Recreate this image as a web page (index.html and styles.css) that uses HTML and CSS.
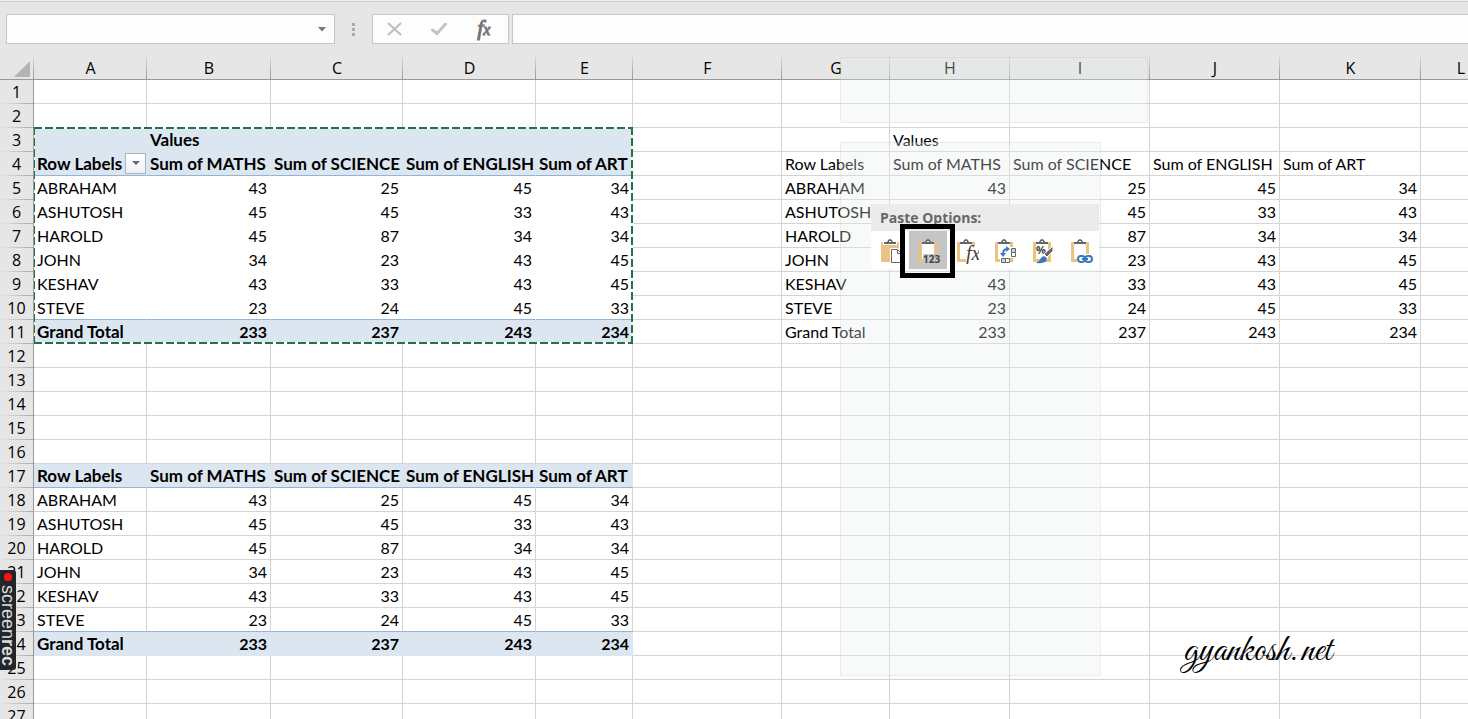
FILE: index.html
```
<!DOCTYPE html>
<html lang="en">
<head>
  <meta charset="utf-8">
  <meta name="viewport" content="width=device-width, initial-scale=1">
  <title>Pivot table - paste values</title>
  <link rel="stylesheet" href="styles.css">
</head>
<body>
  <!-- Formula bar -->
  <div class="formula-bar">
    <div class="name-box">
      <input type="text" class="name-input" aria-label="Name box">
      <button type="button" class="name-arrow" aria-label="Open name list">
        <svg width="8" height="5" viewBox="0 0 8 5"><path d="M0 0h8L4 4.500z" fill="#777"/></svg>
      </button>
    </div>
    <div class="grip"><i></i><i></i><i></i></div>
    <div class="fx-buttons">
      <button type="button" aria-label="Cancel">
        <svg width="16" height="14" viewBox="0 0 16 14"><path d="M1 1l13 12M14 1L1 13" stroke="#bdbdbd" stroke-width="2" fill="none"/></svg>
      </button>
      <button type="button" aria-label="Enter">
        <svg width="18" height="14" viewBox="0 0 18 14"><path d="M1 8l2-1 4 3 8-9 2 1-10 11z" fill="#c2c2c2" stroke="#c2c2c2"/></svg>
      </button>
      <button type="button" class="fx" aria-label="Insert function">f<span>x</span></button>
    </div>
    <input type="text" class="formula-input" aria-label="Formula">
  </div>

  <!-- Sheet -->
  <div class="sheet">
    <table class="grid">
      <colgroup>
        <col class="c-num"><col class="c-a"><col class="c-b"><col class="c-c"><col class="c-d"><col class="c-e"><col class="c-f"><col class="c-g"><col class="c-h"><col class="c-i"><col class="c-j"><col class="c-k"><col class="c-l">
      </colgroup>
      <thead>
        <tr><th class="corner"><svg width="16" height="16" viewBox="0 0 16 16"><path d="M16 0v16H0z" fill="#b4b4b4"/></svg></th><th>A</th><th>B</th><th>C</th><th>D</th><th>E</th><th>F</th><th>G</th><th>H</th><th>I</th><th>J</th><th>K</th><th>L</th></tr>
      </thead>
      <tbody>
        <tr><th>1</th><td></td><td></td><td></td><td></td><td></td><td></td><td></td><td></td><td></td><td></td><td></td><td></td></tr>
        <tr><th>2</th><td></td><td></td><td></td><td></td><td></td><td></td><td></td><td></td><td></td><td></td><td></td><td></td></tr>
        <tr class="pivot-top"><th>3</th><td></td><td>Values</td><td></td><td></td><td></td><td></td><td></td><td>Values</td><td></td><td></td><td></td><td></td></tr>
        <tr class="pivot-head"><th>4</th><td><div class="label-cell">Row Labels <button type="button" class="filter" aria-label="Filter row labels"><svg width="8" height="5" viewBox="0 0 8 5"><path d="M0 0h8L4 4z" fill="#666"/></svg></button></div></td><td>Sum of MATHS</td><td>Sum of SCIENCE</td><td>Sum of ENGLISH</td><td>Sum of ART</td><td></td><td>Row Labels</td><td>Sum of MATHS</td><td>Sum of SCIENCE</td><td>Sum of ENGLISH</td><td>Sum of ART</td><td></td></tr>
        <tr class="pivot-row"><th>5</th><td>ABRAHAM</td><td class="n">43</td><td class="n">25</td><td class="n">45</td><td class="n">34</td><td></td><td>ABRAHAM</td><td class="n">43</td><td class="n">25</td><td class="n">45</td><td class="n">34</td><td></td></tr>
        <tr class="pivot-row"><th>6</th><td>ASHUTOSH</td><td class="n">45</td><td class="n">45</td><td class="n">33</td><td class="n">43</td><td></td><td>ASHUTOSH</td><td class="n">45</td><td class="n">45</td><td class="n">33</td><td class="n">43</td><td></td></tr>
        <tr class="pivot-row"><th>7</th><td>HAROLD</td><td class="n">45</td><td class="n">87</td><td class="n">34</td><td class="n">34</td><td></td><td>HAROLD</td><td class="n"></td><td class="n">87</td><td class="n">34</td><td class="n">34</td><td></td></tr>
        <tr class="pivot-row"><th>8</th><td>JOHN</td><td class="n">34</td><td class="n">23</td><td class="n">43</td><td class="n">45</td><td></td><td>JOHN</td><td class="n"></td><td class="n">23</td><td class="n">43</td><td class="n">45</td><td></td></tr>
        <tr class="pivot-row"><th>9</th><td>KESHAV</td><td class="n">43</td><td class="n">33</td><td class="n">43</td><td class="n">45</td><td></td><td>KESHAV</td><td class="n">43</td><td class="n">33</td><td class="n">43</td><td class="n">45</td><td></td></tr>
        <tr class="pivot-row pivot-last"><th>10</th><td>STEVE</td><td class="n">23</td><td class="n">24</td><td class="n">45</td><td class="n">33</td><td></td><td>STEVE</td><td class="n">23</td><td class="n">24</td><td class="n">45</td><td class="n">33</td><td></td></tr>
        <tr class="pivot-total"><th>11</th><td>Grand Total</td><td class="n">233</td><td class="n">237</td><td class="n">243</td><td class="n">234</td><td></td><td>Grand Total</td><td class="n">233</td><td class="n">237</td><td class="n">243</td><td class="n">234</td><td></td></tr>
        <tr><th>12</th><td></td><td></td><td></td><td></td><td></td><td></td><td></td><td></td><td></td><td></td><td></td><td></td></tr>
        <tr><th>13</th><td></td><td></td><td></td><td></td><td></td><td></td><td></td><td></td><td></td><td></td><td></td><td></td></tr>
        <tr><th>14</th><td></td><td></td><td></td><td></td><td></td><td></td><td></td><td></td><td></td><td></td><td></td><td></td></tr>
        <tr><th>15</th><td></td><td></td><td></td><td></td><td></td><td></td><td></td><td></td><td></td><td></td><td></td><td></td></tr>
        <tr><th>16</th><td></td><td></td><td></td><td></td><td></td><td></td><td></td><td></td><td></td><td></td><td></td><td></td></tr>
        <tr class="pivot-head"><th>17</th><td>Row Labels</td><td>Sum of MATHS</td><td>Sum of SCIENCE</td><td>Sum of ENGLISH</td><td>Sum of ART</td><td></td><td></td><td></td><td></td><td></td><td></td><td></td></tr>
        <tr><th>18</th><td>ABRAHAM</td><td class="n">43</td><td class="n">25</td><td class="n">45</td><td class="n">34</td><td></td><td></td><td></td><td></td><td></td><td></td><td></td></tr>
        <tr><th>19</th><td>ASHUTOSH</td><td class="n">45</td><td class="n">45</td><td class="n">33</td><td class="n">43</td><td></td><td></td><td></td><td></td><td></td><td></td><td></td></tr>
        <tr><th>20</th><td>HAROLD</td><td class="n">45</td><td class="n">87</td><td class="n">34</td><td class="n">34</td><td></td><td></td><td></td><td></td><td></td><td></td><td></td></tr>
        <tr><th>21</th><td>JOHN</td><td class="n">34</td><td class="n">23</td><td class="n">43</td><td class="n">45</td><td></td><td></td><td></td><td></td><td></td><td></td><td></td></tr>
        <tr><th>22</th><td>KESHAV</td><td class="n">43</td><td class="n">33</td><td class="n">43</td><td class="n">45</td><td></td><td></td><td></td><td></td><td></td><td></td><td></td></tr>
        <tr class="pivot-last"><th>23</th><td>STEVE</td><td class="n">23</td><td class="n">24</td><td class="n">45</td><td class="n">33</td><td></td><td></td><td></td><td></td><td></td><td></td><td></td></tr>
        <tr class="pivot-total"><th>24</th><td>Grand Total</td><td class="n">233</td><td class="n">237</td><td class="n">243</td><td class="n">234</td><td></td><td></td><td></td><td></td><td></td><td></td><td></td></tr>
        <tr><th>25</th><td></td><td></td><td></td><td></td><td></td><td></td><td></td><td></td><td></td><td></td><td></td><td></td></tr>
        <tr><th>26</th><td></td><td></td><td></td><td></td><td></td><td></td><td></td><td></td><td></td><td></td><td></td><td></td></tr>
        <tr><th>27</th><td></td><td></td><td></td><td></td><td></td><td></td><td></td><td></td><td></td><td></td><td></td><td></td></tr>
      </tbody>
    </table>

    <!-- Copied range -->
    <div class="ants"></div>

    <!-- Faded menus behind the paste options -->
    <div class="ghost ghost-toolbar"></div>
    <div class="ghost ghost-menu"></div>

    <div class="paste">
      <div class="paste-title">Paste Options:</div>
      <div class="paste-list">
        <button type="button" aria-label="Paste">
          <svg width="24" height="26" viewBox="0 0 24 26"><path d="M2 4h18v20H2z" fill="#eac282"/><path d="M4 3h14v4H4z" fill="#fff"/><path d="M5 6V4h3q1-3 3-3t3 3h3v2z" fill="#666"/><path d="M10 3h2v1h-2z" fill="#fff"/><path d="M11 10h8l5 4v11H11z" fill="#fff"/><path d="M12.500 11.500h6l4 4v9h-10z" fill="#fff" stroke="#666"/><path d="M18.500 11.500v4h4" fill="none" stroke="#666"/></svg>
        </button>
        <button type="button" class="selected" aria-label="Values">
          <svg width="24" height="26" viewBox="0 0 24 26"><path d="M2 4h18v20H2z" fill="#eac282"/><path d="M5 4h12v17H5z" fill="#fff"/><path d="M5 6V4h3q1-3 3-3t3 3h3v2z" fill="#666"/><path d="M10 3h2v1h-2z" fill="#fff"/><path d="M6 16h18v10H6z" fill="#c5c5c5"/><text x="6" y="25" class="icon-123">123</text></svg>
        </button>
        <button type="button" aria-label="Formulas">
          <svg width="24" height="26" viewBox="0 0 24 26"><path d="M2 4h18v20H2z" fill="#eac282"/><path d="M5 4h12v17H5z" fill="#fff"/><path d="M5 6V4h3q1-3 3-3t3 3h3v2z" fill="#666"/><path d="M10 3h2v1h-2z" fill="#fff"/><path d="M11 9h13v17H11z" fill="#fff"/><text x="11" y="22" class="icon-fx">fx</text></svg>
        </button>
        <button type="button" aria-label="Transpose">
          <svg width="24" height="26" viewBox="0 0 24 26"><path d="M2 4h18v20H2z" fill="#eac282"/><path d="M5 4h12v17H5z" fill="#fff"/><path d="M5 6V4h3q1-3 3-3t3 3h3v2z" fill="#666"/><path d="M10 3h2v1h-2z" fill="#fff"/><path d="M7 19h10v7H7zM17 9h6v11h-6z" fill="#fff"/><path d="M8.500 20.500h4v4h-4zM18.500 10.500h4v4h-4z" fill="#c3d6ec" stroke="#666"/><path d="M12.500 20.500h4v4h-4zM18.500 14.500h4v4h-4z" fill="#fff" stroke="#666"/><path d="M10 16q0-5 4-5" fill="none" stroke="#3c78be" stroke-width="2"/><path d="M13 8l4 3-4 3zM7 15h6l-3 4z" fill="#3c78be"/></svg>
        </button>
        <button type="button" aria-label="Formatting">
          <svg width="24" height="26" viewBox="0 0 24 26"><path d="M2 4h18v20H2z" fill="#eac282"/><path d="M5 4h12v17H5z" fill="#fff"/><path d="M5 6V4h3q1-3 3-3t3 3h3v2z" fill="#666"/><path d="M10 3h2v1h-2z" fill="#fff"/><text x="5" y="16" class="icon-pct">%</text><path d="M22 8v5l-6 6-3-3z" fill="#666" stroke="#fff"/><path d="M5 25q3-1 5-5 2-3 5-1 2 3-1 5-4 2-9 1z" fill="#3c78be"/></svg>
        </button>
        <button type="button" aria-label="Paste link">
          <svg width="24" height="26" viewBox="0 0 24 26"><path d="M2 4h18v20H2z" fill="#eac282"/><path d="M5 4h12v17H5z" fill="#fff"/><path d="M5 6V4h3q1-3 3-3t3 3h3v2z" fill="#666"/><path d="M10 3h2v1h-2z" fill="#fff"/><path d="M8 16h16v10H8z" fill="#fff"/><rect x="9" y="18" width="7" height="6" rx="3" fill="none" stroke="#3c78be" stroke-width="2"/><rect x="16" y="18" width="7" height="6" rx="3" fill="none" stroke="#3c78be" stroke-width="2"/><path d="M13 21h6" stroke="#3c78be" stroke-width="2"/></svg>
        </button>
      </div>
      <div class="highlight"></div>
    </div>

    <div class="signature">gyankosh.net</div>
    <div class="recorder"><i></i><span>screen<b>rec</b></span></div>
  </div>
</body>
</html>
```

FILE: styles.css
```
* {
  box-sizing: border-box;
}

body {
  margin: 0;
  height: 100vh;
  display: flex;
  flex-direction: column;
  overflow: hidden;
  background: #fff;
  color: #000;
  font-family: Lato, Carlito, sans-serif;
  font-size: 16px;
}

button {
  padding: 0;
  border: none;
  background: none;
}

svg {
  display: block;
}

/* formula bar */
.formula-bar {
  flex: none;
  display: flex;
  height: 56px;
  padding: 13px 0 12px;
  border-top: 1px solid #f0f0f0;
  background: #e6e6e6;
  box-shadow: inset 0 1px #ccc;
}

.name-box,
.fx-buttons,
.formula-input {
  height: 30px;
  border: 1px solid #c6c6c6;
  background: #fdfdfd;
}

.name-box {
  display: flex;
  width: 329px;
  margin-left: 6px;
}

.name-input {
  flex: 1;
  min-width: 0;
  border: none;
  background: none;
}

.name-arrow {
  display: flex;
  align-items: center;
  justify-content: center;
  width: 24px;
}

.grip {
  display: flex;
  flex-direction: column;
  align-items: center;
  justify-content: center;
  gap: 2px;
  width: 37px;
}

.grip i {
  width: 3px;
  height: 3px;
  background: #aaa;
}

.fx-buttons {
  display: flex;
  width: 137px;
  margin-right: 3px;
  padding-right: 2px;
}

.fx-buttons button {
  display: flex;
  flex: 1;
  align-items: center;
  justify-content: center;
}

.fx-buttons .fx {
  align-items: baseline;
  color: #666;
  font: italic 22px/26px "Liberation Serif", serif;
  -webkit-text-stroke: 1px #777;
}

.fx span {
  font-size: 16px;
}

.formula-input {
  flex: 1;
  border-right: none;
}

/* sheet */
.sheet {
  position: relative;
  flex: 1;
  min-height: 0;
  overflow: hidden;
}

.grid {
  width: 1501px;
  table-layout: fixed;
  border-collapse: separate;
  border-spacing: 0;
}

.c-num { width: 34px; }
.c-a { width: 113px; }
.c-b { width: 124px; }
.c-c { width: 132px; }
.c-d { width: 133px; }
.c-e { width: 97px; }
.c-f { width: 149px; }
.c-g { width: 108px; }
.c-h { width: 120px; }
.c-i { width: 140px; }
.c-j { width: 130px; }
.c-k { width: 141px; }
.c-l { width: 80px; }

.grid th,
.grid td {
  height: 24px;
  padding: 0 3px;
  border-right: 1px solid #d4d4d4;
  border-bottom: 1px solid #d4d4d4;
  line-height: 23px;
  text-align: left;
  white-space: nowrap;
}

.grid th {
  padding: 0;
  border-right: 1px solid #999;
  background: linear-gradient(to right, #e6e6e6, #aaa) bottom / 100% 1px no-repeat #e6e6e6;
  border-bottom: none;
  font-family: "Open Sans", "Noto Sans", sans-serif;
  font-weight: normal;
  text-align: center;
}

.grid thead th {
  padding-top: 2px;
  border-right: none;
  border-bottom: 1px solid #999;
  background: linear-gradient(to bottom, #dcdcdc, #999) right / 1px 100% no-repeat #e6e6e6;
  line-height: 21px;
}

.grid .corner svg {
  margin: 1px 0 0 14px;
}

.grid .n {
  text-align: right;
}

/* pivot colours, columns A to E */
.pivot-top td:nth-child(-n+6),
.pivot-head td:nth-child(-n+6),
.pivot-total td:nth-child(-n+6) {
  border-color: #dce6f1;
  background: #dce6f1;
  font-weight: bold;
}

.pivot-top td:nth-child(-n+6),
.pivot-head td:nth-child(-n+6),
.pivot-total td:nth-child(2) {
  font-size: 17px;
}

.pivot-row td:nth-child(-n+6) {
  border-color: #fff;
}

.pivot-head td:nth-child(-n+6),
.pivot-last td:nth-child(-n+6) {
  border-bottom-color: #95b3d7;
}

.label-cell {
  display: flex;
  align-items: center;
  justify-content: space-between;
  height: 23px;
  margin-right: -3px;
}

.filter {
  display: flex;
  align-items: center;
  justify-content: center;
  width: 21px;
  height: 21px;
  border: 1px solid #acb4bf;
  background: linear-gradient(#fff, #eef0f4);
}

.ants {
  position: absolute;
  top: 71px;
  left: 34px;
  width: 599px;
  height: 217px;
  background:
    repeating-linear-gradient(to right, #217346 0 8px, #fff 8px 11px) top / 100% 2px no-repeat,
    repeating-linear-gradient(to right, #217346 0 8px, #fff 8px 11px) bottom / 100% 2px no-repeat,
    repeating-linear-gradient(to bottom, #217346 0 8px, #fff 8px 11px) left / 1px 100% no-repeat,
    repeating-linear-gradient(to bottom, #217346 0 8px, #fff 8px 11px) right / 2px 100% no-repeat;
}

.ghost {
  position: absolute;
  left: 840px;
  border: 1px solid rgba(0, 0, 0, 0.05);
  background: rgba(232, 238, 235, 0.3);
}

.ghost-toolbar {
  top: 1px;
  width: 308px;
  height: 66px;
}

.ghost-menu {
  top: 86px;
  width: 261px;
  height: 534px;
}

/* paste options */
.paste {
  position: absolute;
  top: 148px;
  left: 871px;
  width: 228px;
  background: #fff;
}

.paste-title {
  height: 27px;
  padding-left: 9px;
  background: #ebebeb;
  color: #666;
  font: bold 14px/27px "Open Sans", "Noto Sans", sans-serif;
}

.paste-list {
  display: flex;
}

.paste-list button {
  display: flex;
  flex: 1;
  align-items: center;
  justify-content: center;
  height: 38px;
  padding: 2px 0 0 2px;
}

.paste-list .selected {
  background: #c5c5c5;
}

.icon-123 {
  fill: #444;
  font: bold 10px "Open Sans", sans-serif;
}

.icon-fx {
  fill: #444;
  font: italic 20px "Liberation Serif", serif;
}

.icon-pct {
  fill: #444;
  font: bold 11px "Open Sans", sans-serif;
}

.highlight {
  position: absolute;
  top: 20px;
  left: 29px;
  width: 55px;
  height: 54px;
  border: 5px solid #000;
}

.signature {
  position: absolute;
  top: 574px;
  left: 1184px;
  font: 38px/44px "Great Vibes", "Liberation Serif", cursive;
}

/* screen recorder tab */
.recorder {
  position: absolute;
  top: 514px;
  left: 0;
  display: flex;
  flex-direction: column;
  align-items: center;
  gap: 4px;
  width: 16px;
  height: 100px;
  padding-top: 3px;
  border-radius: 0 3px 3px 0;
  background: #22262a;
  color: #ddd;
  font: 18px/16px "Liberation Sans", sans-serif;
}

.recorder i {
  width: 8px;
  height: 8px;
  border-radius: 50%;
  background: #f11;
}

.recorder span {
  writing-mode: vertical-rl;
}
```
